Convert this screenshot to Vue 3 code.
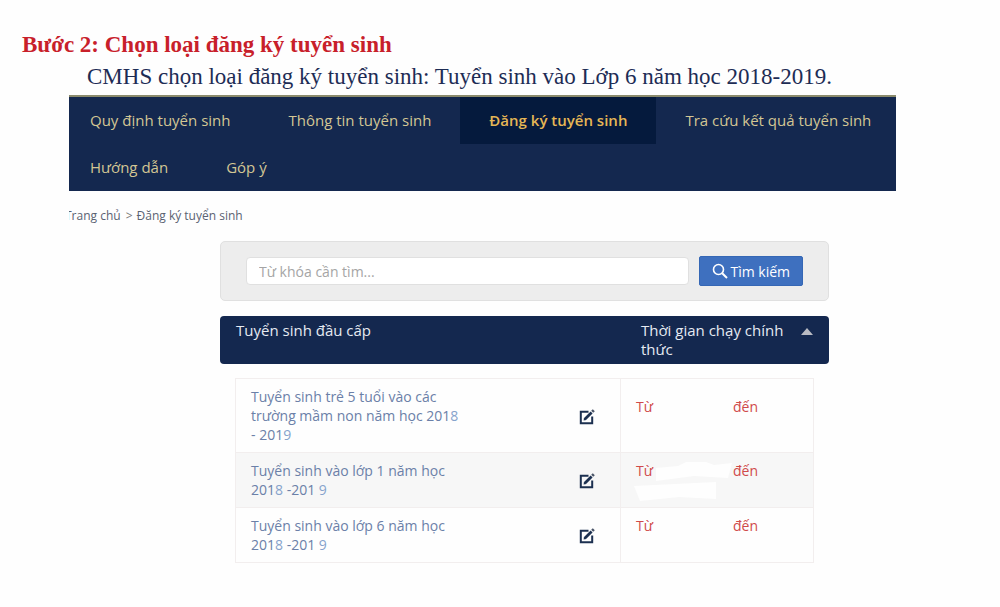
<template>
  <div class="page">
    <h1 class="step">Bước 2: Chọn loại đăng ký tuyển sinh</h1>
    <p class="intro">CMHS chọn loại đăng ký tuyển sinh: Tuyển sinh vào Lớp 6 năm học 2018-2019.</p>

    <div class="site">
      <nav class="nav">
        <ul class="menu">
          <li v-for="item in menu" :key="item">
            <a href="#" :class="{ active: item === current }">{{ item }}</a>
          </li>
        </ul>
      </nav>

      <div class="breadcrumb">
        <a href="#">Trang chủ</a><span class="sep">&gt;</span><a href="#">Đăng ký tuyển sinh</a>
      </div>

      <main class="content">
        <form class="search" @submit.prevent>
          <input v-model="keyword" type="text" placeholder="Từ khóa cần tìm..." aria-label="Từ khóa cần tìm" />
          <button type="submit">
            <svg width="16" height="16" viewBox="0 0 16 16" fill="none" stroke="currentColor">
              <circle cx="6.5" cy="6.5" r="5" stroke-width="1.6" />
              <path d="M10.2 10.2L15 15" stroke-width="2" />
            </svg>
            Tìm kiếm
          </button>
        </form>

        <div class="heading">
          <div class="heading-name">Tuyển sinh đầu cấp</div>
          <div class="heading-time">Thời gian chạy chính thức</div>
          <svg class="caret" width="12" height="7" viewBox="0 0 12 7">
            <path d="M6 0L12 7H0Z" fill="#b9bbc3" />
          </svg>
        </div>

        <table class="list">
          <tbody>
            <tr v-for="row in rows" :key="row.id">
              <td class="name">
                <a href="#">
                  <template v-for="(part, i) in row.parts" :key="i">
                    <span v-if="i % 2 === 1" class="digit">{{ part }}</span>
                    <template v-else>{{ part }}</template>
                  </template>
                </a>
              </td>
              <td class="edit">
                <button type="button" aria-label="Đăng ký">
                  <svg width="16" height="16" viewBox="0 0 16 16" fill="none" stroke="#1c3050">
                    <path d="M9.5 2.8H1.8V14.2H13.2V7.6" stroke-width="2" />
                    <path d="M5.8 10.2L12.6 3.4" stroke-width="2.8" />
                    <path d="M4.6 11.4L5 8.8L7.2 11Z" fill="#1c3050" stroke="none" />
                    <path d="M13.2 2.8L14.8 1.2" stroke-width="2.8" stroke="#4a5568" />
                  </svg>
                </button>
              </td>
              <td class="time">
                <svg v-if="row.erased" class="erased" width="100" height="42" viewBox="0 0 100 42" fill="#fefefe">
                  <path d="M22 8L44 6L52 2H72L80 5L98 3L94 18L60 16L22 21Z" />
                  <path d="M0 26L82 22V39L45 37L6 41Z" />
                </svg>
                <div class="dates"><span>Từ</span><span>đến</span></div>
              </td>
            </tr>
          </tbody>
        </table>
      </main>
    </div>
  </div>
</template>

<script setup>
import { ref } from 'vue';

const keyword = ref('');
const current = ref('Đăng ký tuyển sinh');

const menu = [
  'Quy định tuyển sinh',
  'Thông tin tuyển sinh',
  'Đăng ký tuyển sinh',
  'Tra cứu kết quả tuyển sinh',
  'Hướng dẫn',
  'Góp ý'
];

// the odd parts are the last digits of the years
const rows = [
  { id: 1, parts: ['Tuyển sinh trẻ 5 tuổi vào các trường mầm non năm học 201', '8', ' - 201', '9'] },
  { id: 2, parts: ['Tuyển sinh vào lớp 1 năm học 201', '8', ' -201', ' 9'], erased: true },
  { id: 3, parts: ['Tuyển sinh vào lớp 6 năm học 201', '8', ' -201', ' 9'] }
];
</script>

<style>
body {
  margin: 0;
  background: #fefefe;
}
</style>

<style scoped>
* {
  box-sizing: border-box;
}

.page {
  padding-top: 32px;
  font-family: "Open Sans", "Noto Sans", sans-serif;
  font-size: 14px;
  line-height: 19px;
}

.page a {
  text-decoration: none;
}

.step,
.intro {
  margin: 0;
  font-family: "Liberation Serif", "Times New Roman", serif;
  font-size: 23px;
  line-height: 26px;
}

.step {
  padding-left: 22px;
  color: #c8202a;
}

.intro {
  padding: 6px 0 5px 87px;
  color: #1d2c55;
}

.site {
  margin: 0 104px 0 69px;
}

.nav {
  overflow: hidden;
  border-top: 2px solid #8b8b6c;
  background: #14284f;
}

.menu {
  display: flex;
  flex-wrap: wrap;
  margin: 0 -8px;
  padding: 0;
  list-style: none;
}

.menu a {
  display: block;
  padding: 0 29px;
  font-size: 15px;
  line-height: 47px;
  color: #d3c694;
}

.menu a.active {
  background: #051a3d;
  color: #e6b755;
  font-weight: 600;
}

.breadcrumb {
  overflow: hidden;
  margin-top: 16px;
  font-size: 12px;
  line-height: 18px;
  text-indent: -4px;
}

.breadcrumb a {
  color: #5a6272;
}

.sep {
  margin: 0 4px 0 5px;
  color: #777;
}

.content {
  margin: 16px 67px 0 151px;
}

.search {
  display: flex;
  align-items: center;
  gap: 10px;
  padding: 14px 25px;
  border: 1px solid #e0e0e0;
  border-radius: 5px;
  background: #ededed;
}

.search input {
  flex: 1;
  min-width: 0;
  height: 28px;
  padding: 0 12px;
  border: 1px solid #e0e0e0;
  border-radius: 4px;
  background: #fff;
  font: inherit;
  color: #444;
}

.search input::placeholder {
  color: #a5a5a5;
}

.search button {
  display: flex;
  align-items: center;
  gap: 2px;
  height: 30px;
  padding: 0 12px;
  border: 1px solid #3567b5;
  border-radius: 2px;
  background: #3e70bf;
  font: inherit;
  color: #fff;
}

.heading {
  display: flex;
  margin-top: 15px;
  padding: 5px 16px;
  border-radius: 4px;
  background: #14284f;
  font-size: 15px;
  color: #e6eaf2;
}

.heading-name {
  flex: 1;
}

.heading-time {
  width: 148px;
}

.caret {
  margin: 7px 0 0 12px;
}

.list {
  width: calc(100% - 30px);
  margin: 14px 15px 0;
  border-collapse: collapse;
  table-layout: fixed;
}

.list tr {
  border: 1px solid #f2eeee;
}

.list tr:nth-child(even) {
  background: #f7f7f7;
}

.list td {
  padding: 8px 0 8px 15px;
  vertical-align: middle;
}

.list .name {
  width: 39%;
}

.name a {
  color: #6b80a8;
}

.name .digit {
  color: #86a3cc;
}

.list .edit {
  padding-right: 25px;
}

.edit button {
  display: flex;
  margin-left: auto;
  padding: 2px 0 0;
  border: 0;
  background: none;
}

.list .time {
  position: relative;
  width: 193px;
  border-left: 1px solid #f2eeee;
}

.erased {
  position: absolute;
  top: 7px;
  left: 13px;
}

.dates {
  position: relative;
  display: grid;
  grid-template-columns: 97px auto;
  min-height: 38px;
  color: #d04a4a;
}
</style>
